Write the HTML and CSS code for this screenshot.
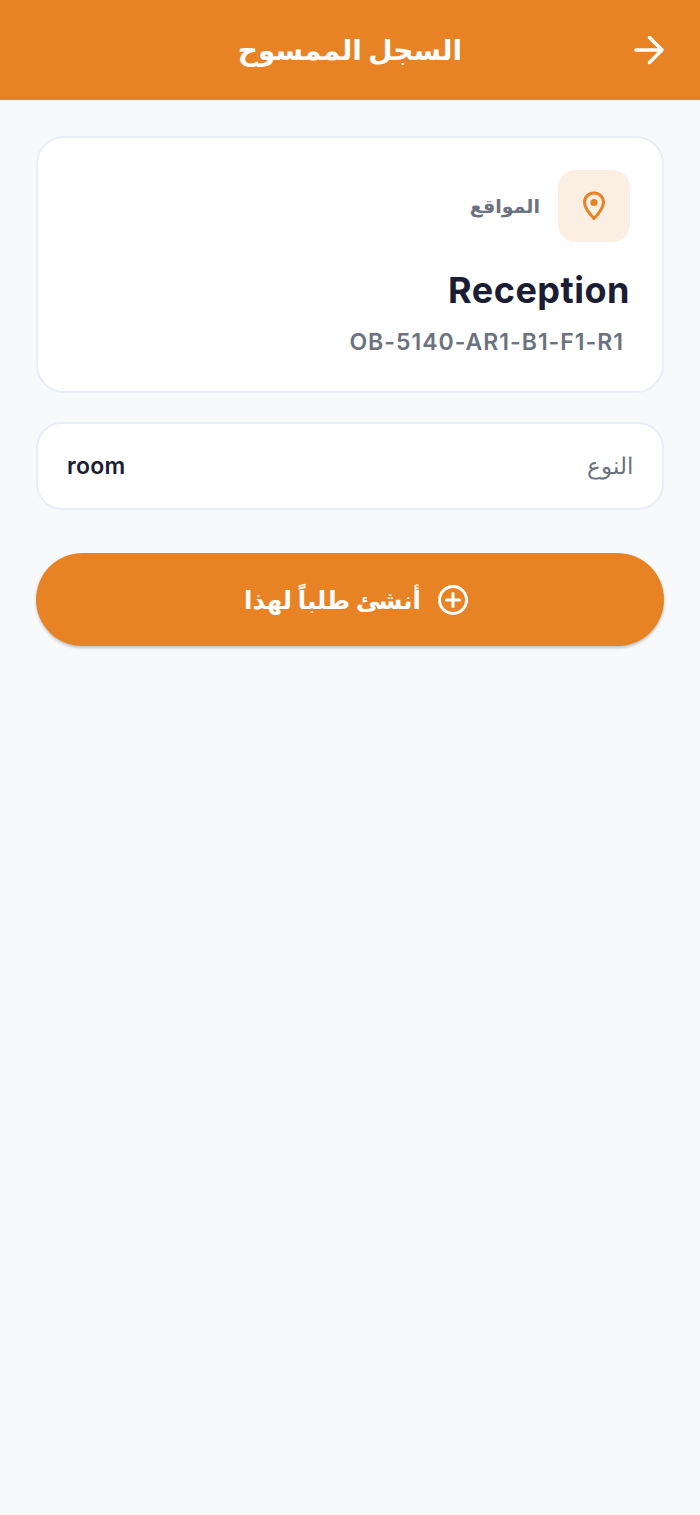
FILE: index.html
```html
<!DOCTYPE html>
<html lang="ar" dir="rtl">

<head>
  <title>السجل الممسوح</title>
  <link rel="stylesheet" href="styles.css">
</head>

<body>
  <!-- Header -->
  <div class="header">
    <svg class="back-icon" viewBox="0 0 32 32" width="32" height="32" fill="none" stroke="#FFFFFF" stroke-width="3.500" stroke-linecap="round" stroke-linejoin="round">
      <path d="M3 16H29M16.500 3.500L29 16L16.500 28.500" />
    </svg>
    <h1 class="header-title">السجل الممسوح</h1>
  </div>

  <div class="content">
    <!-- Location card -->
    <div class="location-card">
      <div class="location-top">
        <div class="icon-box">
          <svg viewBox="0 0 24 30" width="24" height="30" fill="none">
            <path d="M12 27.500C12 27.500 2.500 17.500 2.500 11.500C2.500 6 6.700 2 12 2C17.300 2 21.500 6 21.500 11.500C21.500 17.500 12 27.500 12 27.500Z" stroke="#E78324" stroke-width="3" stroke-linejoin="round" />
            <circle cx="12" cy="11.500" r="3.600" fill="#E78324" />
          </svg>
        </div>
        <span class="location-label">المواقع</span>
      </div>
      <div class="location-name">Reception</div>
      <div class="location-code">OB-5140-AR1-B1-F1-R1</div>
    </div>

    <!-- Type row -->
    <div class="type-row">
      <span class="type-label">النوع</span>
      <span class="type-value">room</span>
    </div>

    <!-- Create button -->
    <button class="create-button" type="button">
      <svg viewBox="0 0 32 32" width="32" height="32" fill="none" stroke="#FFFFFF" stroke-width="3" stroke-linecap="round">
        <circle cx="16" cy="16" r="13.500" />
        <path d="M16 9.500V22.500M9.500 16H22.500" />
      </svg>
      <span>أنشئ طلباً لهذا</span>
    </button>
  </div>
</body>

</html>
```

FILE: styles.css
```css
/* Global Styles */
* {
  box-sizing: border-box;
}

body {
  margin: 0;
  min-height: 1515px;
  background-color: #F8F9FB;
  font-family: Inter, "Noto Sans", "DejaVu Sans", sans-serif;
}

/* Header CSS */
.header {
  height: 100px;
  background-color: #E78324;
  display: flex;
  align-items: center;
  justify-content: center;
  position: relative;
}

.back-icon {
  position: absolute;
  right: 35px;
  top: 34px;
}

.header-title {
  margin: 0;
  color: #FFFFFF;
  font-size: 28px;
  font-weight: 700;
}

/* Content CSS */
.content {
  padding: 36px 36px 0;
}

/* Location Card CSS */
.location-card {
  height: 257px;
  padding: 32px 32px 0;
  background-color: #FFFFFF;
  border: 2px solid #E9EDF6;
  border-radius: 28px;
}

.location-top {
  display: flex;
  align-items: center;
  gap: 18px;
}

.icon-box {
  width: 72px;
  height: 72px;
  background-color: #FBEFE3;
  border-radius: 18px;
  display: flex;
  align-items: center;
  justify-content: center;
}

.location-label {
  color: #6B7280;
  font-size: 19px;
  font-weight: 600;
}

.location-name {
  direction: ltr;
  text-align: right;
  margin-top: 26px;
  color: #1A1D33;
  font-size: 36px;
  font-weight: 700;
  line-height: 44px;
  letter-spacing: 0.5px;
}

.location-code {
  direction: ltr;
  text-align: right;
  margin-top: 15px;
  padding-right: 6px;
  color: #6B7280;
  font-size: 23px;
  font-weight: 600;
  line-height: 30px;
  letter-spacing: 1px;
}

/* Type Row CSS */
.type-row {
  margin-top: 29px;
  height: 88px;
  padding: 0 29px;
  background-color: #FFFFFF;
  border: 2px solid #E9EDF6;
  border-radius: 26px;
  display: flex;
  align-items: center;
  justify-content: space-between;
}

.type-label {
  color: #6B7280;
  font-size: 23px;
  font-weight: 300;
}

.type-value {
  color: #1A1D33;
  font-size: 23px;
  font-weight: 600;
  letter-spacing: 0.3px;
}

/* Create Button CSS */
.create-button {
  margin-top: 43px;
  width: 100%;
  height: 93px;
  padding: 0 0 0 13px;
  border: none;
  border-radius: 47px;
  background-color: #E78324;
  box-shadow: 0 2px 3px rgba(0, 0, 0, 0.22);
  color: #FFFFFF;
  font-family: inherit;
  font-size: 24.500px;
  font-weight: 700;
  display: flex;
  align-items: center;
  justify-content: center;
  gap: 16px;
}
```
